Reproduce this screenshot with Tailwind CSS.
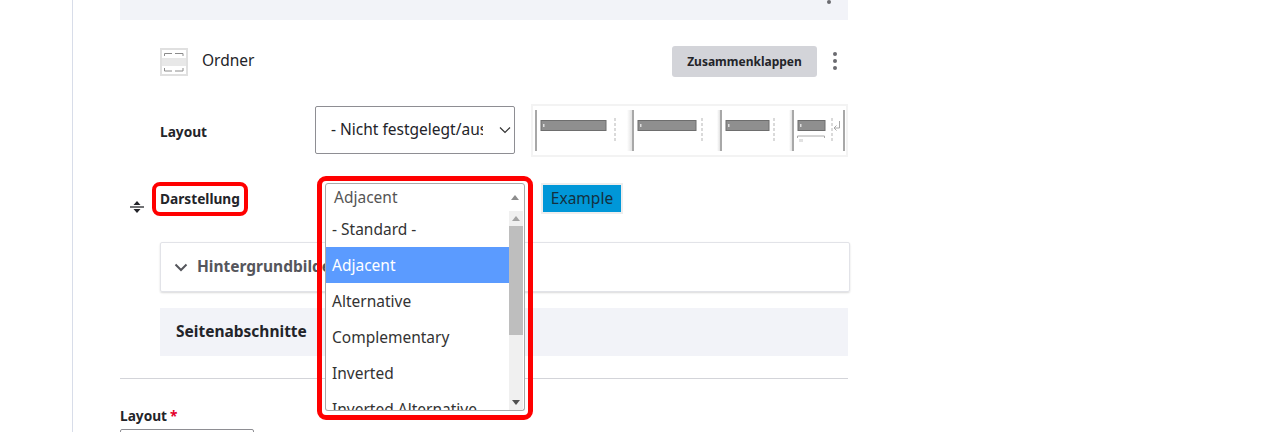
<!DOCTYPE html>
<html lang="de">
<head>
  <meta charset="UTF-8" />
  <title>Layout</title>
  <script src="https://cdn.jsdelivr.net/npm/@tailwindcss/browser@4"></script>
</head>
<body class="bg-white">
  <div class="relative w-[1280px] h-[432px] overflow-hidden bg-white font-['Noto_Sans',sans-serif] text-[#232429]">
    <div class="ml-[72px] w-[776px] h-[432px] border-l border-[#d8dde9] pl-[47px]">

      <!-- top of the previous block -->
      <div class="relative h-5 bg-[#f2f3f8]">
        <span class="absolute left-[707px] top-0 size-1 rounded-full bg-[#6b6b70]"></span>
      </div>

      <div class="pl-10">
        <!-- paragraph header -->
        <div class="flex items-center h-7 mt-7">
          <svg width="28" height="28" viewBox="0 0 28 28" class="shrink-0">
            <rect x="1" y="1" width="26" height="26" fill="#fff" stroke="#e0e0e0" stroke-width="2" />
            <rect x="2" y="10" width="24" height="8" fill="#e8e8e8" />
            <path d="M4.500 8V5.500H12M15 5.500H23V8M4.500 20V23H12M15 23H23V20" fill="none" stroke="#8c8c8c" />
          </svg>
          <span class="ml-[14px] mb-[2px] text-[15.5px]">Ordner</span>
          <button class="ml-auto mr-[9px] self-start -mt-[2px] h-[31px] w-[145px] rounded-[3px] bg-[#d3d4d9] text-[12px] font-bold">Zusammenklappen</button>
          <div class="flex flex-col gap-[3px] mr-[4px] mb-[2px] w-[18px] items-center">
            <span class="size-1 rounded-full bg-[#6b6b70]"></span>
            <span class="size-1 rounded-full bg-[#6b6b70]"></span>
            <span class="size-1 rounded-full bg-[#6b6b70]"></span>
          </div>
        </div>

        <!-- layout row -->
        <div class="flex items-center mt-[28px]">
          <label class="w-[155px] text-[13.7px] font-bold pt-[3px]">Layout</label>
          <div class="flex items-center w-[200px] h-12 mb-[2px] border border-[#8e8e93] rounded-[2px] pl-[15px] pr-[2px]">
            <span class="w-[152px] overflow-hidden whitespace-nowrap text-[15.5px]">- Nicht festgelegt/ausgewählt</span>
            <svg width="14" height="14" viewBox="0 0 14 14" class="ml-auto"><path d="M2 4.500l5 5 5-5" fill="none" stroke="#333" stroke-width="1.200" /></svg>
          </div>
          <div class="flex ml-[16px] w-[317px] h-[53px] border-2 border-[#f3f3f3]">
            <svg width="94" height="49" viewBox="0 0 94 49" class="shrink-0">
              <rect x="2" y="4" width="2" height="41" fill="#a8a8a8" />
              <rect x="8" y="14.500" width="65" height="10" fill="#8f8f8f" stroke="#6e6e6e" />
              <rect x="10" y="18" width="1.500" height="3" fill="#ddd" />
              <path d="M82 12v24" stroke="#b5b5b5" stroke-dasharray="3 2" />
            </svg>
            <svg width="90" height="49" viewBox="0 0 90 49" class="shrink-0">
              <defs>
                <linearGradient id="shade" x1="0" x2="1" y1="0" y2="0">
                  <stop offset="0" stop-color="#ffffff" />
                  <stop offset="1" stop-color="#e2e2e2" />
                </linearGradient>
              </defs>
              <rect x="0" y="4" width="5" height="41" fill="url(#shade)" />
              <rect x="5" y="4" width="2" height="41" fill="#a8a8a8" />
              <rect x="11" y="14.500" width="58" height="10" fill="#8f8f8f" stroke="#6e6e6e" />
              <rect x="13" y="18" width="1.500" height="3" fill="#ddd" />
              <path d="M75 12v24" stroke="#b5b5b5" stroke-dasharray="3 2" />
            </svg>
            <svg width="72" height="49" viewBox="0 0 72 49" class="shrink-0">
              <rect x="0" y="4" width="3" height="41" fill="url(#shade)" />
              <rect x="3" y="4" width="2" height="41" fill="#a8a8a8" />
              <rect x="9" y="14.500" width="43" height="10" fill="#8f8f8f" stroke="#6e6e6e" />
              <rect x="11" y="18" width="1.500" height="3" fill="#ddd" />
              <path d="M57 12v24" stroke="#b5b5b5" stroke-dasharray="3 2" />
            </svg>
            <svg width="57" height="49" viewBox="0 0 57 49" class="shrink-0">
              <rect x="0" y="4" width="3" height="41" fill="url(#shade)" />
              <rect x="3" y="4" width="2" height="41" fill="#a8a8a8" />
              <rect x="9" y="14.500" width="27" height="10" fill="#8f8f8f" stroke="#6e6e6e" />
              <rect x="11" y="18" width="1.500" height="3" fill="#ddd" />
              <path d="M8.500 32v-2h27v2" fill="none" stroke="#aaa" />
              <path d="M11 33v3M13 33v3" stroke="#c4c4c4" />
              <path d="M43 12v24" stroke="#b5b5b5" stroke-dasharray="3 2" />
              <path d="M50.500 15v7h-5M47.500 19.500l-2.500 2.500 2.500 2.500" fill="none" stroke="#a8a8a8" />
              <rect x="54" y="4" width="2" height="41" fill="#a8a8a8" />
            </svg>
          </div>
        </div>

        <!-- darstellung row -->
        <div class="relative flex items-start mt-[26px] h-[29px]">
          <svg width="16" height="16" viewBox="0 0 16 16" class="absolute left-[-31px] top-[16px]">
            <path d="M8 2l3.500 4h-7zM8 14l-3.500-4h7z" fill="#232429" />
            <path d="M1 8h14" stroke="#232429" stroke-width="1.300" />
          </svg>
          <label class="w-[165px] text-[13.7px] font-bold leading-[31px]">Darstellung</label>
          <div class="flex items-center justify-between w-[200px] h-[29px] border border-[#a9a9a9] rounded-t-[3px] pl-2 pr-[5px] text-[#555]">
            <span class="pt-px text-[15.5px]">Adjacent</span>
            <svg width="8" height="5" viewBox="0 0 8 5"><path d="M4 0l4 5H0z" fill="#8d8d8d" /></svg>
          </div>
          <div class="ml-[16px] w-[82px] h-[31px] border-2 border-[#eeeeee]">
            <div class="h-full text-center bg-[#0097d8] text-[15.5px] leading-[27px] text-[#143040]">Example</div>
          </div>
        </div>

        <!-- accordion -->
        <div class="flex items-center mt-[30px] w-[690px] h-[50px] border border-[#e2e3e8] rounded-[2px] shadow-[0_1px_2px_rgba(0,0,0,0.15)] pl-[13px]">
          <svg width="14" height="14" viewBox="0 0 14 14"><path d="M1.500 4.500L7 10l5.500-5.500" fill="none" stroke="#55565c" stroke-width="2" /></svg>
          <span class="ml-[9px] text-[15.5px] font-bold text-[#55565c]">Hintergrundbilder</span>
        </div>

        <div class="flex items-center mt-4 w-[688px] h-12 bg-[#f2f3f8] pl-4">
          <span class="text-[15.5px] font-bold">Seitenabschnitte</span>
        </div>
      </div>

      <hr class="mt-[22px] border-[#d3d4d9]" />

      <div class="mt-[27px] text-[13.7px] font-bold leading-[20px]">Layout<span class="ml-[3px] text-[#e4002b]">*</span></div>
      <div class="mt-[3px] w-[134px] h-10 border border-[#8e8e93] rounded-[2px]"></div>
    </div>

    <!-- open select list -->
    <div class="absolute left-[325px] top-[211px] flex w-[200px] h-[200px] overflow-hidden bg-white border-x border-b border-[#a9a9a9] rounded-b-[3px] pr-px">
      <ul class="flex-1 text-[15.5px] text-[#333]">
        <li class="h-9 pl-[6px] leading-9">- Standard -</li>
        <li class="h-9 pl-[6px] leading-9 bg-[#5b9bff] text-white">Adjacent</li>
        <li class="h-9 pl-[6px] leading-9">Alternative</li>
        <li class="h-9 pl-[6px] leading-9">Complementary</li>
        <li class="h-9 pl-[6px] leading-9">Inverted</li>
        <li class="h-9 pl-[6px] leading-9 whitespace-nowrap">Inverted Alternative</li>
      </ul>
      <div class="flex flex-col items-center w-[14px] bg-[#f0f0f0]">
        <svg width="8" height="5" viewBox="0 0 8 5" class="mt-[5px]"><path d="M4 0l4 5H0z" fill="#a3a3a3" /></svg>
        <div class="mt-[5px] w-full h-[109px] bg-[#bebebe]"></div>
        <svg width="8" height="5" viewBox="0 0 8 5" class="mt-auto mb-[5px]"><path d="M4 5L0 0h8z" fill="#505050" /></svg>
      </div>
    </div>

    <!-- red highlight marks -->
    <div class="absolute left-[152px] top-[182px] w-[96px] h-[34px] border-[4.5px] border-[#ff0000] rounded-[8px]"></div>
    <div class="absolute left-[317px] top-[176px] w-[216px] h-[244px] border-[5px] border-[#ff0000] rounded-[9px]"></div>
  </div>
</body>
</html>
